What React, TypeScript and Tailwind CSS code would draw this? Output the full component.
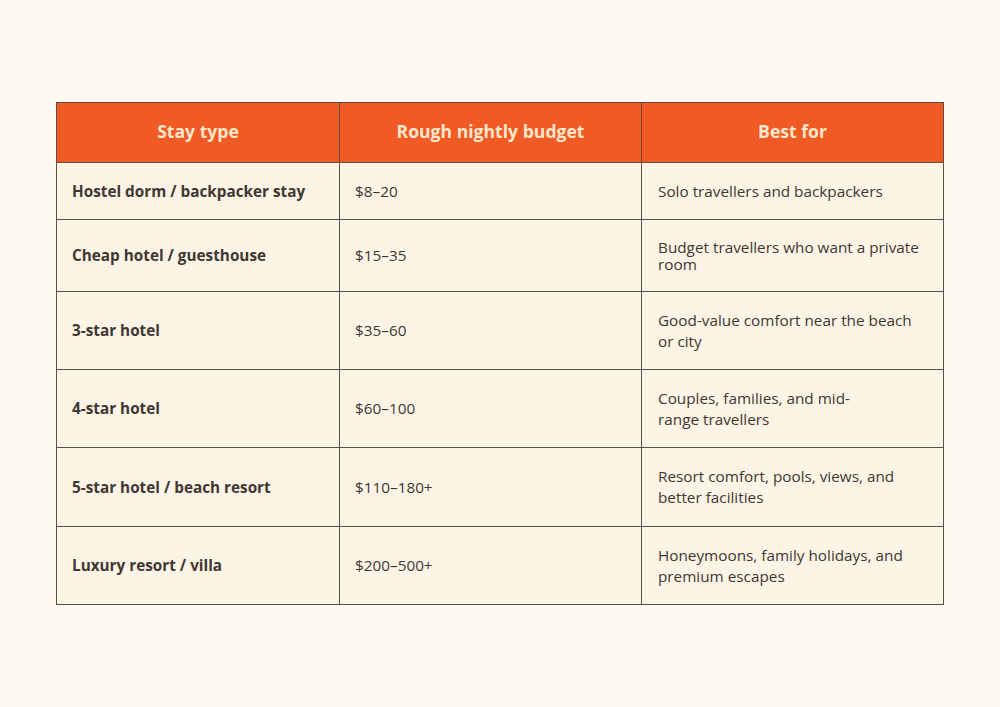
type Row = {
  stay: string;
  budget: string;
  best: string[];
  h: string;
  tight?: boolean;
};

const rows: Row[] = [
  { stay: "Hostel dorm / backpacker stay", budget: "$8–20", best: ["Solo travellers and backpackers"], h: "h-[57px]" },
  { stay: "Cheap hotel / guesthouse", budget: "$15–35", best: ["Budget travellers who want a private", "room"], h: "h-[72px]", tight: true },
  { stay: "3-star hotel", budget: "$35–60", best: ["Good-value comfort near the beach", "or city"], h: "h-[78px]" },
  { stay: "4-star hotel", budget: "$60–100", best: ["Couples, families, and mid-", "range travellers"], h: "h-[78px]" },
  { stay: "5-star hotel / beach resort", budget: "$110–180+", best: ["Resort comfort, pools, views, and", "better facilities"], h: "h-[79px]" },
  { stay: "Luxury resort / villa", budget: "$200–500+", best: ["Honeymoons, family holidays, and", "premium escapes"], h: "h-[78px]" },
];

export default function App() {
  return (
    <div
      className="w-[1000px] h-[707px] bg-[#fefaf3] pt-[102px] pl-[56px]"
      style={{ fontFamily: '"Open Sans", "Noto Sans", sans-serif' }}
    >
      <table className="w-[887px] table-fixed border-collapse border border-[#8f857c] text-[15.3px] text-[#3f3732]">
        <colgroup>
          <col className="w-[283px]" />
          <col className="w-[302px]" />
          <col className="w-[302px]" />
        </colgroup>
        <thead>
          <tr className="h-[60px] bg-[#f05a24] text-[#fde6cc] text-[17.6px] font-bold">
            <th className="border border-[#6b4a3a] text-center align-middle pb-[2px]">Stay type</th>
            <th className="border border-[#6b4a3a] text-center align-middle pb-[2px]">Rough nightly budget</th>
            <th className="border border-[#6b4a3a] text-center align-middle pb-[2px]">Best for</th>
          </tr>
        </thead>
        <tbody className="bg-[#fdf4e6]">
          {rows.map((r) => (
            <tr key={r.stay} className={r.h}>
              <td className="border border-[#5e5148] pl-[15px] align-middle font-bold">{r.stay}</td>
              <td className="border border-[#5e5148] pl-[15px] align-middle">{r.budget}</td>
              <td
                className={
                  r.tight
                    ? "border border-[#5e5148] pl-4 align-middle leading-[17px]"
                    : "border border-[#5e5148] pl-4 align-middle leading-[21px]"
                }
              >
                {r.best.map((line) => (
                  <span key={line} className="block whitespace-nowrap">
                    {line}
                  </span>
                ))}
              </td>
            </tr>
          ))}
        </tbody>
      </table>
    </div>
  );
}
